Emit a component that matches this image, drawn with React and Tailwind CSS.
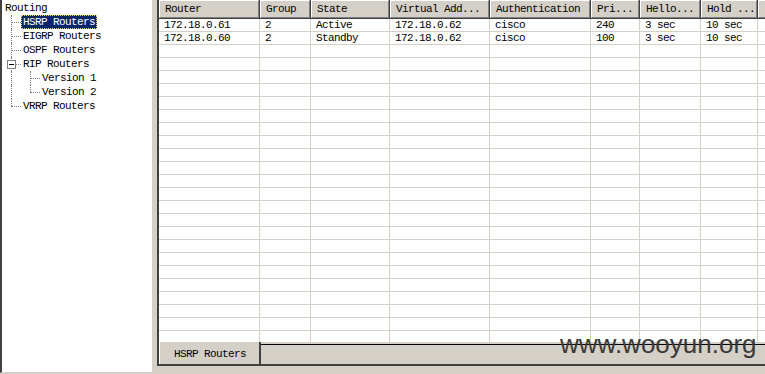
import React from "react";

const mono = "font-['Liberation_Mono',monospace] text-[11px] tracking-[-0.6px] text-black";

const columns = [
  { label: "Router", w: "w-[101px]" },
  { label: "Group", w: "w-[51px]" },
  { label: "State", w: "w-[79px]" },
  { label: "Virtual Add...", w: "w-[100px]" },
  { label: "Authentication", w: "w-[101px]" },
  { label: "Pri...", w: "w-[49px]" },
  { label: "Hello...", w: "w-[61px]" },
  { label: "Hold ...", w: "w-[57px]" },
];

const routers = [
  ["172.18.0.61", "2", "Active", "172.18.0.62", "cisco", "240", "3 sec", "10 sec"],
  ["172.18.0.60", "2", "Standby", "172.18.0.62", "cisco", "100", "3 sec", "10 sec"],
];

// one 19px wide piece of the dotted tree connector
const Gutter = ({ last = false, branch = true, box = false }) => (
  <div className="relative w-[19px] h-[14px] shrink-0">
    <div
      className={`absolute left-[9px] top-0 border-l border-dotted border-[#808080] ${
        last ? "h-[7px]" : "h-[14px]"
      }`}
    />
    {branch && (
      <div className="absolute left-[9px] top-[7px] w-[10px] border-t border-dotted border-[#808080]" />
    )}
    {box && (
      <div className="absolute left-[5px] top-[3px] w-[9px] h-[9px] border border-[#808080] bg-white flex items-center justify-center">
        <div className="w-[5px] h-px bg-black" />
      </div>
    )}
  </div>
);

const Label = ({ text, selected }) =>
  selected ? (
    <div className="h-[14px] px-[1px] pt-px flex items-center whitespace-nowrap bg-[#0a246a] text-white border border-dotted border-[#e8dc8c]">
      {text}
    </div>
  ) : (
    <div className="h-[14px] px-[2px] pt-px flex items-center whitespace-nowrap">{text}</div>
  );

const TreePanel = () => (
  <div className={`w-[153px] h-[373px] shrink-0 bg-white border-l-2 border-l-[#404040] border-r border-b border-[#d4d0c8] pt-[1px] ${mono}`}>
    <div className="flex h-[14px] pl-[1px]">
      <Label text="Routing" />
    </div>
    <div className="flex h-[14px]">
      <Gutter />
      <Label text="HSRP Routers" selected />
    </div>
    <div className="flex h-[14px]">
      <Gutter />
      <Label text="EIGRP Routers" />
    </div>
    <div className="flex h-[14px]">
      <Gutter />
      <Label text="OSPF Routers" />
    </div>
    <div className="flex h-[14px]">
      <Gutter box />
      <Label text="RIP Routers" />
    </div>
    <div className="flex h-[14px]">
      <Gutter branch={false} />
      <Gutter />
      <Label text="Version 1" />
    </div>
    <div className="flex h-[14px]">
      <Gutter branch={false} />
      <Gutter last />
      <Label text="Version 2" />
    </div>
    <div className="flex h-[14px]">
      <Gutter last />
      <Label text="VRRP Routers" />
    </div>
  </div>
);

const HeaderCell = ({ label, w }) => (
  <div className={`${w} h-full shrink-0 border-r border-b border-[#404040]`}>
    <div className="h-full bg-[#d4d0c8] border-t border-l border-white border-r border-b border-r-[#808080] border-b-[#808080] pl-[5px] pt-px flex items-center whitespace-nowrap overflow-hidden">
      {label}
    </div>
  </div>
);

const TableGrid = () => {
  const rows = [...routers, ...Array.from({ length: 24 }, () => Array(8).fill(""))];

  return (
    <div className="flex-1 bg-white overflow-hidden">
      <div className="flex h-[19px]">
        {columns.map((c) => (
          <HeaderCell key={c.label} label={c.label} w={c.w} />
        ))}
        <div className="flex-1 h-full border-b border-[#404040]">
          <div className="h-full bg-[#d4d0c8] border-t border-l border-white border-b border-b-[#808080]" />
        </div>
      </div>
      {rows.map((row, i) => (
        <div key={i} className="flex h-[13px] border-b border-[#d4d0c8]">
          {row.map((val, j) => (
            <div
              key={j}
              className={`${columns[j].w} shrink-0 h-full border-r border-[#d4d0c8] pl-[5px] flex items-center whitespace-nowrap`}
            >
              {val}
            </div>
          ))}
          <div className="flex-1" />
        </div>
      ))}
    </div>
  );
};

export default function App() {
  return (
    <div className="relative w-[765px] h-[374px] bg-[#d4d0c8] flex items-start overflow-hidden">
      <TreePanel />

      <div className={`ml-[4px] flex-1 h-[366px] flex flex-col border-l-2 border-b-2 border-[#404040] ${mono}`}>
        <TableGrid />

        {/* tab strip */}
        <div className="h-[22px] flex bg-[#d4d0c8]">
          <div className="w-[102px] shrink-0 border-l border-white border-r-2 border-r-[#404040] pl-[14px] pt-[2px] flex items-center">
            HSRP Routers
          </div>
          <div className="flex-1 mt-[2px] border-t border-black" />
        </div>
      </div>

      {/* watermark */}
      <div className="absolute left-[560px] top-[331px] font-['Liberation_Sans',Arial,sans-serif] text-[26px] leading-[26px] text-[#3a3a3a]">
        www.wooyun.org
      </div>
    </div>
  );
}
